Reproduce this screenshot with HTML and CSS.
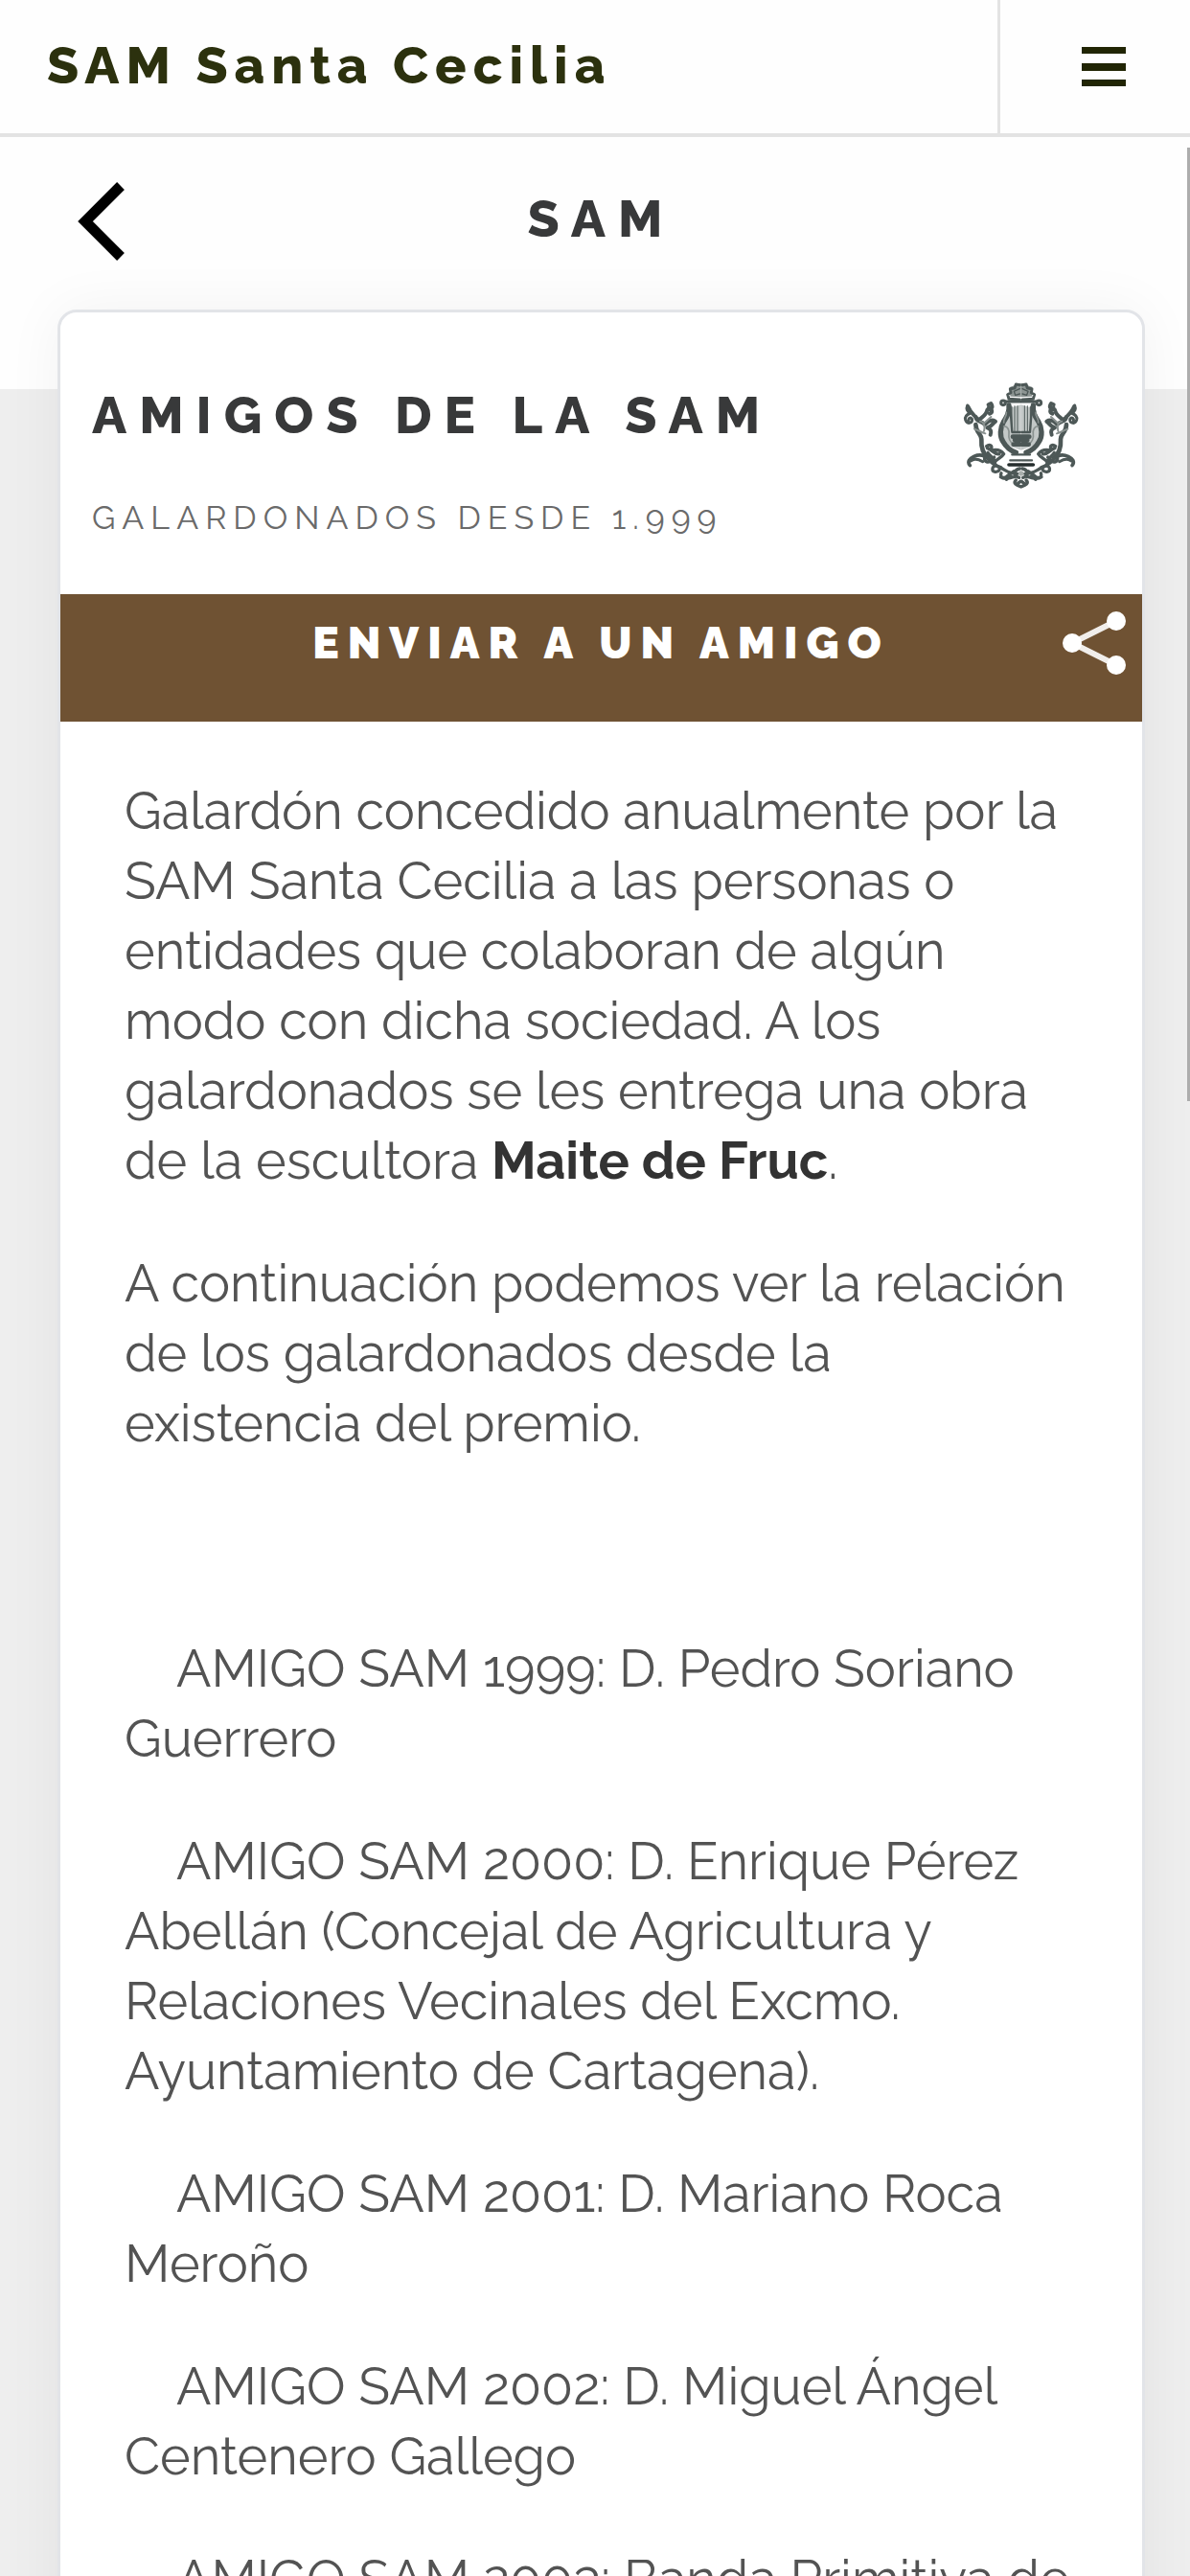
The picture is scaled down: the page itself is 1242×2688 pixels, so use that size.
FILE: index.html
```html
<!DOCTYPE html>
<html lang="es">
<head>
<meta charset="utf-8">
<meta name="viewport" content="width=device-width, initial-scale=1">
<title>SAM Santa Cecilia</title>
<link rel="stylesheet" href="styles.css">
</head>
<body>
<div class="app">
  <header class="topbar">
    <a class="brand" href="#">SAM Santa Cecilia</a>
    <button class="menu" type="button" aria-label="Menú">
      <svg width="48" height="42" viewBox="0 0 48 42" fill="#212504"><path d="M1 0h46v7H1zM1 17h46v8H1zM1 34h46v7H1z"/></svg>
    </button>
  </header>
  <main class="page">
    <nav class="section-nav">
      <button class="back" type="button" aria-label="Volver">
        <svg width="50" height="84" viewBox="0 0 50 84" fill="none" stroke="#000" stroke-width="11"><path d="M46 5L9 42l37 37"/></svg>
      </button>
      <h1 class="section-title">SAM</h1>
    </nav>
    <article class="card">
      <div class="card-head">
        <div class="headings">
          <h2 class="title">AMIGOS DE LA SAM</h2>
          <p class="subtitle">GALARDONADOS DESDE 1.999</p>
        </div>
        <svg class="crest" width="126" height="114" viewBox="122 110 378 342" role="img" aria-label="Escudo SAM Santa Cecilia">
          <defs>
            <g id="crest-half" fill="none" stroke="#4d5857" stroke-linecap="round" stroke-linejoin="round">
              <path d="M264 200c-10 40-30 90 16 118l30 10V186z" fill="#c3c8c7" stroke="none"/>
              <path d="M276 130l34-12v44l-34-2z" fill="#8d9593" stroke="none"/>
              <path d="M306 124l-12-2-4 12-14 2 2 12-10 6 4 14 34 2" stroke-width="9"/>
              <path d="M306 136l-18 8 4 12 14-4" stroke-width="4"/>
              <path d="M308 176h-46" stroke-width="9"/>
              <circle cx="254" cy="180" r="7" stroke-width="9"/>
              <path d="M272 188c2 24-6 34-16 50-12 20-14 46-2 64 10 18 24 28 40 34" stroke-width="16"/>
              <path d="M264 210c2 12-10 18-8 32m0 12c12-2 18 12 16 24s2 24 16 34" stroke="#8a9290" stroke-width="5"/>
              <path d="M281 192v76M290 190v78M299 190v78" stroke-width="3"/>
              <path d="M276 192l6 80h26" stroke-width="7"/>
              <path d="M284 286h24M290 296h18M286 310h22" stroke-width="14"/>
              <path d="M282 342h26M276 360h32" stroke-width="7"/>
              <path d="M272 374h36" stroke="#252d2d" stroke-width="11"/>
              <path d="M142 188c-4 10-2 20 10 24-10 4-20 10-16 22 6 16 26 8 20-4-6-6-12 0-10 6" stroke-width="9"/>
              <path d="M144 192c8 20 20 28 34 42 10-10 24-16 26-32 14-2 20-8 12-20l-8 4m0 10c12 2 14 14 4 18" stroke-width="12"/>
              <path d="M168 224c0 16 20 12 28 24 12-10 20-18 34-10-10 6-12 18-26 20 12 4 14 12 10 22" stroke-width="12"/>
              <path d="M168 248c0 24 18 28 18 46-2 30 8 48 22 60" stroke-width="14"/>
              <path d="M164 262c12 4 22 10 34 14M182 238c12 0 16 16 12 30M216 224l-22 20" stroke="#89918f" stroke-width="6"/>
              <path d="M150 376c-10-12 0-22 12-28 18-8 34-4 46 8 12 14 22 22 38 26" stroke-width="11"/>
              <path d="M152 362c14-12 28-4 38 2" stroke-width="9"/>
              <path d="M202 316c10-8 20 0 14 8m-12-2c16 4 22 22 38 18m-16 10c-10 6-8 18 2 14 14-12 22-14 28-24-6-8-16-14-32-12" stroke-width="10"/>
              <path d="M206 336c10 16 26 18 22 42M196 352c-2 14 12 16 20 10M222 382c-8 16 14 18 20 8" stroke-width="10"/>
              <path d="M242 382c18 6 26 20 56 20M248 400c-6 14 10 20 20 8l20-14m-42 18c16 12 30 0 44 0M264 420l14-10" stroke-width="10"/>
              <path d="M306 386c-20 4-20 24-2 28m-10 8c-10 10 2 16 14 20m0-16l-10 8" stroke-width="10"/>
            </g>
          </defs>
          <use href="#crest-half"/>
          <use href="#crest-half" transform="translate(620 0) scale(-1 1)"/>
          <circle cx="310" cy="401" r="8" fill="#a8aeac"/>
        </svg>
      </div>
      <button class="share" type="button">
        <span class="share-label">ENVIAR A UN AMIGO</span>
        <svg class="share-icon" width="70" height="70" viewBox="0 0 70 70" fill="#fff"><path d="M58 13L12 36l46 23" fill="none" stroke="#f1eeeb" stroke-width="6"/><circle cx="58" cy="13" r="10"/><circle cx="12" cy="36" r="10"/><circle cx="58" cy="59" r="10"/></svg>
      </button>
      <div class="content">
        <p>Galardón concedido anualmente por la SAM Santa Cecilia a las personas o entidades que colaboran de algún modo con dicha sociedad. A los galardonados se les entrega una obra de la escultora <strong>Maite de Fruc</strong>.</p>
        <p>A continuación podemos ver la relación de los galardonados desde la existencia del premio.</p>
        <p>&nbsp;</p>
        <p class="award">AMIGO SAM 1999: D. Pedro Soriano Guerrero</p>
        <p class="award">AMIGO SAM 2000: D. Enrique Pérez Abellán (Concejal de Agricultura y Relaciones Vecinales del Excmo. Ayuntamiento de Cartagena).</p>
        <p class="award">AMIGO SAM 2001: D. Mariano Roca Meroño</p>
        <p class="award">AMIGO SAM 2002: D. Miguel Ángel Centenero Gallego</p>
        <p class="award">AMIGO SAM 2003: Banda Primitiva de</p>
      </div>
    </article>
  </main>
  <div class="scrollbar" aria-hidden="true"></div>
</div>
</body>
</html>
```
FILE: styles.css
```css
* { box-sizing: border-box; }

body {
  margin: 0;
  font-family: Raleway, Lato, "Open Sans", sans-serif;
  color: #535353;
  background: #eee;
}

h1, h2, p { margin: 0; }

button {
  border: 0;
  padding: 0;
  background: none;
  font: inherit;
  cursor: pointer;
}

svg { display: block; }

.app {
  display: flex;
  flex-direction: column;
  height: 100vh;
  position: relative;
}

.topbar {
  flex: none;
  display: flex;
  align-items: stretch;
  height: 143px;
  background: #fefefe;
  border-bottom: 4px solid #e3e3e3;
}

.brand {
  flex: 1;
  padding: 32px 49px;
  font-size: 54px;
  line-height: 72px;
  font-weight: 800;
  letter-spacing: 7px;
  color: #2c310e;
  text-decoration: none;
}

.menu {
  width: 201px;
  padding: 0 66px 0 84px;
  border-left: 3px solid #e3e3e3;
}

.page {
  flex: 1;
  overflow-y: auto;
  scrollbar-width: none;
  padding: 0 47px 0 60px;
  background: linear-gradient(#fefefe 263px, #eee 263px);
}

.section-nav {
  display: grid;
  grid-template-columns: 90px 1fr 90px;
  align-items: start;
  height: 180px;
  padding-top: 46px;
}

.back {
  width: 90px;
  padding-left: 20px;
}

.section-title {
  text-align: center;
  font-size: 54px;
  line-height: 78px;
  font-weight: 800;
  letter-spacing: 13px;
  color: #38393a;
}

.card {
  background: #fff;
  border: 3px solid #e2e4e8;
  border-radius: 20px;
  box-shadow: 0 0 60px rgba(0, 0, 0, 0.05);
}

.card-head {
  display: flex;
  justify-content: space-between;
  align-items: flex-start;
  padding: 71px 63px 51px 33px;
}

.title {
  font-size: 54px;
  line-height: 72px;
  font-weight: 800;
  letter-spacing: 13px;
  color: #38393a;
}

.subtitle {
  margin-top: 42px;
  font-size: 34px;
  line-height: 58px;
  letter-spacing: 7px;
  color: #6a6a6a;
}

.share {
  display: grid;
  grid-template-columns: 70px 1fr 70px;
  align-items: start;
  width: 100%;
  height: 133px;
  padding: 15px 15px 0;
  background: #6f5233;
  color: #fff;
}

.share-label {
  grid-column: 2;
  font-size: 46px;
  line-height: 72px;
  font-weight: 900;
  letter-spacing: 9px;
}

.content {
  display: flex;
  flex-direction: column;
  gap: 55px;
  padding: 57px 66px 57px 67px;
  font-size: 54px;
  line-height: 73px;
}

.content strong { color: #333; }

.award { text-indent: 54px; }

.scrollbar {
  position: absolute;
  top: 154px;
  right: 0;
  width: 3px;
  height: 37%;
  background: #adadad;
}
```
